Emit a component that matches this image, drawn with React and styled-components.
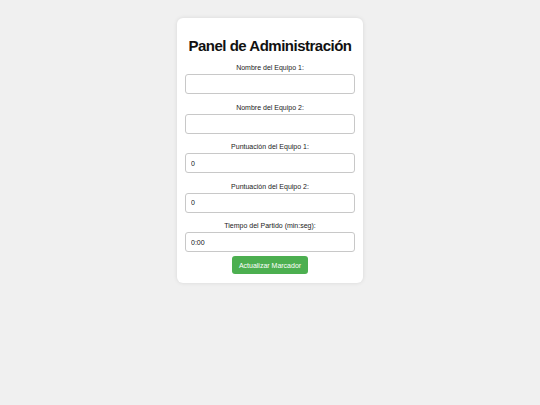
import React, { useState } from "react";
import styled, { createGlobalStyle } from "styled-components";

const GlobalStyle = createGlobalStyle`
  html, body {
    margin: 0;
    padding: 0;
    background: #f0f0f0;
    font-family: "Liberation Sans", Arial, sans-serif;
  }
`;

const Page = styled.div`
  display: flex;
  justify-content: center;
  align-items: flex-start;
  padding-top: 18px;
  min-height: 405px;
  box-sizing: border-box;
`;

const Card = styled.div`
  width: 186px;
  box-sizing: border-box;
  background: #fff;
  border-radius: 6px;
  box-shadow: 0 0 4px rgba(0, 0, 0, 0.1);
  padding: 18px 8px 9px;
  display: flex;
  flex-direction: column;
  align-items: center;
`;

const Title = styled.h1`
  margin: 0 0 7px;
  font-size: 15px;
  line-height: 20px;
  letter-spacing: -0.5px;
  font-weight: bold;
  color: #111;
  white-space: nowrap;
`;

const Field = styled.div`
  width: 100%;
  display: flex;
  flex-direction: column;
  align-items: center;
  margin-bottom: ${props => (props.last ? "4px" : "8.5px")};
`;

const Label = styled.label`
  font-size: 7px;
  line-height: 10px;
  color: #222;
  margin-bottom: 1px;
`;

const Input = styled.input`
  width: 100%;
  height: 20px;
  box-sizing: border-box;
  border: 1px solid #c8c8c8;
  border-radius: 3px;
  padding: 0 5px;
  font-family: "Liberation Sans", Arial, sans-serif;
  font-size: 7px;
  color: #111;
  outline: none;
`;

const Button = styled.button`
  width: 76px;
  height: 18px;
  border: none;
  border-radius: 3px;
  background: #4caf50;
  color: #fff;
  font-family: "Liberation Sans", Arial, sans-serif;
  font-size: 7px;
  cursor: pointer;
  padding: 0;
`;

const fields = [
  { id: "team1", label: "Nombre del Equipo 1:", value: "" },
  { id: "team2", label: "Nombre del Equipo 2:", value: "" },
  { id: "score1", label: "Puntuación del Equipo 1:", value: "0" },
  { id: "score2", label: "Puntuación del Equipo 2:", value: "0" },
  { id: "time", label: "Tiempo del Partido (min:seg):", value: "0:00" }
];

const App = () => {
  const [values, setValues] = useState(
    Object.fromEntries(fields.map(f => [f.id, f.value]))
  );

  return (
    <>
      <GlobalStyle />
      <Page>
        <Card>
          <Title>Panel de Administración</Title>
          {fields.map((f, i) => (
            <Field key={f.id} last={i === fields.length - 1}>
              <Label htmlFor={f.id}>{f.label}</Label>
              <Input
                id={f.id}
                value={values[f.id]}
                onChange={e => setValues({ ...values, [f.id]: e.target.value })}
              />
            </Field>
          ))}
          <Button>Actualizar Marcador</Button>
        </Card>
      </Page>
    </>
  );
};

export default App;
